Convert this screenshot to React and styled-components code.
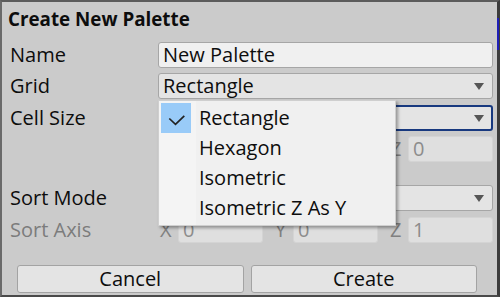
import React from 'react';
import styled, { createGlobalStyle } from 'styled-components';

const GlobalStyle = createGlobalStyle`
    html, body {
        margin: 0;
        padding: 0;
        background: #cbcbcb;
    }
    body {
        font-family: "Open Sans", "Noto Sans", sans-serif;
    }
`;

const Window = styled.div`
    position: relative;
    box-sizing: border-box;
    width: 500px;
    height: 297px;
    background: #cbcbcb;
    border-top: 2px solid #5c5c5c;
    border-left: 2px solid #6a6a6a;
    border-right: 3px solid #3c3c3c;
    border-bottom: 2px solid #4a4a4a;
    display: flex;
    flex-direction: column;
    color: #0d0d0d;

    &::after {
        content: '';
        position: absolute;
        right: -2px;
        top: 16px;
        width: 2px;
        height: 32px;
        background: #1f1fb8;
    }
`;

const Title = styled.div`
    padding: 5px 0 0 6px;
    font-size: 18.8px;
    font-weight: 700;
    line-height: 24px;
    height: 24px;
`;

const Form = styled.div`
    display: flex;
    flex-direction: column;
    gap: 5.5px;
    margin-top: 10.5px;
    padding: 0 4px 0 8px;
`;

const Row = styled.div`
    display: grid;
    grid-template-columns: 148px 1fr;
    align-items: center;
    height: 26px;
    margin-top: ${p => p.$spaced ? '17.5px' : '0'};
`;

const Label = styled.div`
    font-size: 20px;
    line-height: 26px;
    color: ${p => p.$disabled ? '#7c7c7c' : '#0d0d0d'};
    white-space: nowrap;
`;

const TextField = styled.div`
    box-sizing: border-box;
    height: 26px;
    padding-left: 4px;
    background: #f0f0f0;
    border: 1px solid #a6a6a6;
    border-radius: 3px;
    font-size: 20px;
    line-height: 24px;
    white-space: nowrap;
`;

const Dropdown = styled.div`
    position: relative;
    box-sizing: border-box;
    height: 26px;
    padding-left: ${p => p.$focused ? '3px' : '4px'};
    background: #e4e4e4;
    border: ${p => p.$focused ? '2px solid #18397f' : '1px solid #a6a6a6'};
    border-radius: 3px;
    font-size: 20px;
    line-height: ${p => p.$focused ? '22px' : '24px'};
    white-space: nowrap;
`;

const Arrow = styled.span`
    position: absolute;
    right: ${p => p.$focused ? '7px' : '8px'};
    top: 50%;
    margin-top: -3px;
    width: 0;
    height: 0;
    border-left: 5.5px solid transparent;
    border-right: 5.5px solid transparent;
    border-top: 7px solid #565656;
`;

const Vector = styled.div`
    display: grid;
    grid-template-columns: repeat(3, 1fr);
    column-gap: 10px;
`;

const Axis = styled.div`
    display: grid;
    grid-template-columns: 20px 1fr;
    align-items: center;
`;

const AxisName = styled.span`
    padding-left: 2px;
    font-size: 20px;
    line-height: 26px;
    height: 26px;
    color: #808080;
`;

const NumberField = styled.div`
    box-sizing: border-box;
    height: 26px;
    padding-left: 4px;
    background: #dfdfdf;
    border: 1px solid #d4d4d4;
    border-radius: 3px;
    font-size: 20px;
    line-height: 24px;
    color: #8c8c8c;
`;

const Menu = styled.div`
    position: absolute;
    left: -1px;
    top: calc(100% + 2px);
    z-index: 5;
    box-sizing: border-box;
    width: 238px;
    padding: 2px 0 2px 2px;
    background: linear-gradient(to right, #f4f4f4 37px, #f0f0f0 37px);
    border: 1px solid #cfcfcf;
    box-shadow: 2px 2px 3px rgba(0, 0, 0, 0.35);
    color: #0d0d0d;
`;

const MenuItem = styled.div`
    display: flex;
    align-items: center;
    height: 30px;
    font-size: 20px;
`;

const CheckCell = styled.div`
    display: flex;
    align-items: center;
    justify-content: center;
    width: 30px;
    height: 30px;
    margin-right: 8px;
    background: ${p => p.$checked ? '#99cbf8' : 'transparent'};
`;

const Buttons = styled.div`
    display: flex;
    gap: 7px;
    margin-top: 22.5px;
    padding: 0 20px 0 15px;
`;

const Button = styled.button`
    flex: 1;
    box-sizing: border-box;
    height: 28px;
    padding: 0;
    background: #e4e4e4;
    border: 1px solid #a3a3a3;
    border-radius: 3px;
    font-family: "Open Sans", "Noto Sans", sans-serif;
    font-size: 20px;
    line-height: 26px;
    color: #0d0d0d;
`;

const gridOptions = ['Rectangle', 'Hexagon', 'Isometric', 'Isometric Z As Y'];

const Check = () => (
    <svg width="30" height="30" viewBox="0 0 30 30">
        <polyline points="8.3,15.5 14.5,21.3 23.3,12.8" fill="none" stroke="#222" strokeWidth="1.7" />
    </svg>
);

// axes hidden under the open menu keep their boxes but show no text
const VectorField = ({ values, covered = 0 }) => (
    <Vector>
        {['X', 'Y', 'Z'].map((axis, i) => (
            <Axis key={axis}>
                <AxisName>{i < covered ? '' : axis}</AxisName>
                <NumberField>{i < covered ? '' : values[i]}</NumberField>
            </Axis>
        ))}
    </Vector>
);

const App = () => {
    return (
        <Window>
            <GlobalStyle />
            <Title>Create New Palette</Title>
            <Form>
                <Row>
                    <Label>Name</Label>
                    <TextField>New Palette</TextField>
                </Row>
                <Row>
                    <Label>Grid</Label>
                    <Dropdown>
                        Rectangle
                        <Arrow />
                        <Menu>
                            {gridOptions.map((option, i) => (
                                <MenuItem key={option}>
                                    <CheckCell $checked={i === 0}>{i === 0 && <Check />}</CheckCell>
                                    {option}
                                </MenuItem>
                            ))}
                        </Menu>
                    </Dropdown>
                </Row>
                <Row>
                    <Label>Cell Size</Label>
                    <Dropdown $focused>
                        <Arrow $focused />
                    </Dropdown>
                </Row>
                <Row>
                    <Label />
                    <VectorField values={['1', '1', '0']} covered={2} />
                </Row>
                <Row $spaced>
                    <Label>Sort Mode</Label>
                    <Dropdown>
                        <Arrow />
                    </Dropdown>
                </Row>
                <Row>
                    <Label $disabled>Sort Axis</Label>
                    <VectorField values={['0', '0', '1']} />
                </Row>
            </Form>
            <Buttons>
                <Button>Cancel</Button>
                <Button>Create</Button>
            </Buttons>
        </Window>
    );
};

export default App;
